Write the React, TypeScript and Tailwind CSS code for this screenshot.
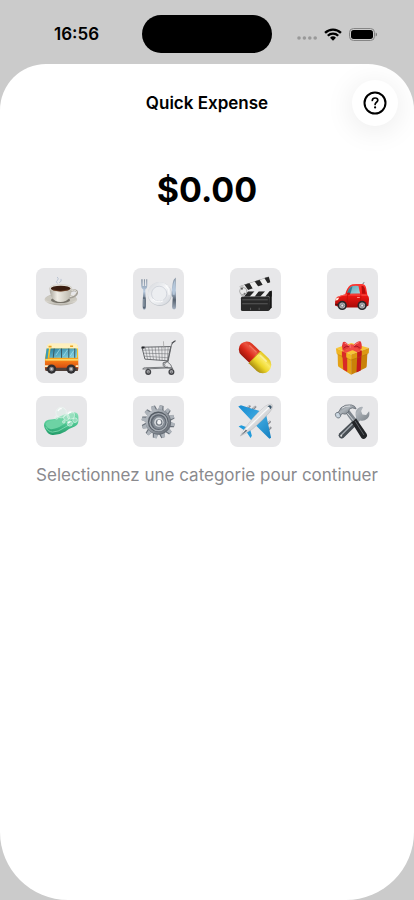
import { useState } from "react";
import type { ReactNode } from "react";

type Category = {
  id: string;
  label: string;
  art: ReactNode;
};

const CoffeeArt = () => (
  <>
    <defs>
      <linearGradient id="cup" x1="0" x2="1">
        <stop offset="0" stopColor="#a9a59b" />
        <stop offset="0.35" stopColor="#efece4" />
        <stop offset="1" stopColor="#b9b5aa" />
      </linearGradient>
      <linearGradient id="saucer" x1="0" y1="0" x2="0" y2="1">
        <stop offset="0" stopColor="#b9b5ac" />
        <stop offset="0.7" stopColor="#d8d5cd" />
        <stop offset="1" stopColor="#aaa69d" />
      </linearGradient>
    </defs>
    <path d="M64 46q-6-5 1-9q5-4 0-9M71 44q8-3 5-10" fill="none" stroke="#b9c3d3" strokeWidth="3" strokeLinecap="round" />
    <ellipse cx="75" cy="95" rx="49" ry="18" fill="url(#saucer)" />
    <ellipse cx="75" cy="93" rx="45" ry="14" fill="#cbc8bf" />
    <ellipse cx="74" cy="97" rx="29" ry="9" fill="#77736b" />
    <path d="M105 69q20-5 19 6q-2 12-24 15" fill="none" stroke="#a39f96" strokeWidth="6" />
    <path d="M105 68q19-4 17 6q-2 9-21 13" fill="none" stroke="#e6e3dc" strokeWidth="3" />
    <path d="M41 61q0 27 17 38q16 8 33 0q17-11 17-38z" fill="url(#cup)" />
    <ellipse cx="74.500" cy="61" rx="34" ry="11" fill="#e9e6de" stroke="#b5b1a8" />
    <ellipse cx="74.500" cy="62" rx="30" ry="8.500" fill="#3a1d10" />
    <path d="M50 66q24 9 49 0" fill="none" stroke="#7b4b2c" strokeWidth="2" />
  </>
);

const PlateArt = () => (
  <>
    <defs>
      <linearGradient id="steel" x1="0" y1="0" x2="0" y2="1">
        <stop offset="0" stopColor="#7d8b9b" />
        <stop offset="0.4" stopColor="#b9cbe0" />
        <stop offset="0.7" stopColor="#56616f" />
        <stop offset="1" stopColor="#a7b3c3" />
      </linearGradient>
      <linearGradient id="plate" x1="0" y1="0" x2="1" y2="1">
        <stop offset="0" stopColor="#d3d6db" />
        <stop offset="0.5" stopColor="#f4f5f7" />
        <stop offset="1" stopColor="#cfd3d9" />
      </linearGradient>
    </defs>
    <circle cx="81" cy="79" r="36" fill="#c5c9cf" />
    <circle cx="80" cy="77" r="35" fill="url(#plate)" />
    <circle cx="79" cy="78" r="23" fill="#eceef1" stroke="#c4c9d1" strokeWidth="2" />
    <path d="M61 94a24 24 0 0 0 30 5M99 52a31 31 0 0 1 10 29" fill="none" stroke="#fff" strokeWidth="3" />
    <path d="M25 34v20q0 9 6 11l-2 52q0 9 5 9t5-9l-2-52q6-2 6-11V34h-3v20h-4V34h-3v20h-4V34z" fill="url(#steel)" />
    <path d="M30 89v29q0 5 4 5t4-5V89z" fill="#566474" />
    <path d="M33 93v24" stroke="#c9d6e4" strokeWidth="2" />
    <path d="M129 29q-13 9-12 54l3 6-2 29q0 7 6 7t6-7z" fill="url(#steel)" />
    <path d="M127 35q-8 17-7 46h6z" fill="#b5c7da" />
  </>
);

const ClapperArt = () => (
  <>
    <defs>
      <clipPath id="arm">
        <path d="M28 55L117 26l5 17L34 73z" />
      </clipPath>
      <clipPath id="slate">
        <path d="M33 70h93v17H33z" />
      </clipPath>
    </defs>
    <g clipPath="url(#arm)">
      <rect width="154" height="154" fill="#ececec" />
      <path d="M40 45l18 26h16L55 39zM70 34l18 26h16L86 30zM101 26l15 24h14V20z" fill="#262626" />
      <path d="M28 55L117 26" stroke="#777" strokeWidth="2" />
    </g>
    <g clipPath="url(#slate)">
      <rect width="154" height="154" fill="#ececec" />
      <path d="M55 70L42 87h17l15-17zM87 70L74 87h17l15-17zM119 70l-13 17h25V70z" fill="#262626" />
    </g>
    <rect x="33" y="86" width="86" height="44" rx="5" fill="#292929" />
    <path d="M119 71l7-3v51l-8 9z" fill="#151515" />
    <path d="M37 96h77M37 108h77M62 120v7M88 120v7" stroke="#727272" strokeWidth="2" />
    <path d="M29 56l10-2 13 14-8 17H33q2-15-4-29z" fill="#bfbfbf" />
    <circle cx="40" cy="70" r="11" fill="#e8e8e8" stroke="#8d8d8d" strokeWidth="2" />
    <circle cx="36" cy="63" r="3" fill="#555" />
    <circle cx="44" cy="78" r="3" fill="#777" />
  </>
);

const CarArt = () => (
  <>
    <defs>
      <linearGradient id="carBody" x1="0" y1="0" x2="0" y2="1">
        <stop offset="0" stopColor="#ff3b35" />
        <stop offset="0.5" stopColor="#ef1712" />
        <stop offset="1" stopColor="#a90a09" />
      </linearGradient>
      <linearGradient id="carGlass" x1="0" y1="0" x2="1" y2="1">
        <stop offset="0" stopColor="#5fa7b6" />
        <stop offset="1" stopColor="#a3d6dd" />
      </linearGradient>
    </defs>
    <path d="M107 50l5-7" stroke="#333" strokeWidth="2" />
    <path d="M24 113l1-17q3-10 17-13l13-4q5-19 15-27 5-4 18-4h17q11 0 13 12l4 22q5 3 5 12l-2 20-14 5H40z" fill="url(#carBody)" />
    <path d="M60 78q5-17 13-22 4-3 22-2l5 23z" fill="url(#carGlass)" />
    <path d="M60 78q5-17 12-21l5-2-6 23z" fill="#367d91" />
    <path d="M104 54q8-1 10 8l3 16h-11z" fill="#b50d0b" />
    <path d="M30 89q14-7 31-8l59 1" fill="none" stroke="#ff7b70" strokeWidth="2" />
    <path d="M62 80q-4 16 4 34h24q15-13 12-34" fill="none" stroke="#b80c09" strokeWidth="2" />
    <ellipse cx="65" cy="78" rx="5" ry="4" fill="#d50e0b" />
    <path d="M26 92l11-3-4 8-8 2z" fill="#ffe7d8" />
    <path d="M25 110h9" stroke="#591010" strokeWidth="4" />
    <path d="M91 89h8" stroke="#ff9a90" strokeWidth="3" />
    {[46, 106].map((x) => (
      <g key={x}>
        <circle cx={x} cy="113" r="14" fill="#29282b" />
        <circle cx={x} cy="113" r="9" fill="#b7b8bc" />
        <path d={`M${x - 8} 113h16M${x} 105v16M${x - 6} 107l12 12M${x + 6} 107l-12 12`} stroke="#67686c" strokeWidth="2" />
        <circle cx={x} cy="113" r="3" fill="#e8e8ea" />
      </g>
    ))}
  </>
);

const BusArt = () => (
  <>
    <defs>
      <linearGradient id="busBody" x1="0" y1="0" x2="0" y2="1">
        <stop offset="0" stopColor="#ffd83d" />
        <stop offset="0.45" stopColor="#ffc11b" />
        <stop offset="0.65" stopColor="#f47716" />
        <stop offset="1" stopColor="#c43a12" />
      </linearGradient>
      <linearGradient id="busGlass" x1="0" y1="0" x2="1" y2="1">
        <stop offset="0" stopColor="#277e9e" />
        <stop offset="1" stopColor="#8edae8" />
      </linearGradient>
    </defs>
    <path d="M27 111V78l6-31q1-10 9-10h76q8 0 9 9l1 65q0 7-7 7H34q-7 0-7-7z" fill="url(#busBody)" />
    <path d="M33 47q0-13 13-13h69q12 0 12 13l-1 3H32z" fill="#fff0bd" />
    <path d="M38 44h9M103 43h9" stroke="#e9a11e" strokeWidth="5" />
    <path d="M32 50h7l-4 31h-7z" fill="#3a9cb7" />
    <path d="M44 50h76q4 0 4 4v24H40z" fill="url(#busGlass)" />
    <path d="M55 50l-3 28M77 50v28M99 50v28M117 50v28" stroke="#3a5860" strokeWidth="3" />
    <path d="M60 70l12-18M83 72l12-18M103 73l11-17" stroke="#b8edf1" strokeWidth="3" opacity="0.6" />
    <path d="M28 84h99" stroke="#ffe879" strokeWidth="4" />
    <path d="M28 108h98v10H33q-5 0-5-5z" fill="#52423b" />
    <path d="M27 103h11M120 103h8" stroke="#fff0bd" strokeWidth="5" />
    {[47, 106].map((x) => (
      <g key={x}>
        <circle cx={x} cy="112" r="14" fill="#302f32" />
        <circle cx={x} cy="112" r="7" fill="#88898d" />
        <circle cx={x} cy="112" r="3" fill="#d5d6d8" />
      </g>
    ))}
  </>
);

const CartArt = () => (
  <>
    <g fill="none" stroke="#64666a">
      <path d="M27 46l87-2-9 43-69-5z" strokeWidth="3" />
      <path d="M29 55l83-1M31 64l79 2M33 73l75 5M37 46l7 36M47 46l6 37M57 45l5 39M67 45l4 40M77 45l3 40M87 45l1 41M97 45l-1 41M106 45l-2 41" strokeWidth="1.500" />
      <path d="M127 28q-8 1-11 12l-10 48-15 5q-2 10 6 14l24 3" strokeWidth="3" />
      <path d="M107 89q-16 4-10 14M105 91q12 7 13 19M29 112l87-4M30 112q1-5 7-4l69-2" strokeWidth="2.500" />
      <path d="M92 28l1 22" strokeWidth="2" stroke="#999" />
    </g>
    <path d="M118 33l9-6" stroke="#55575b" strokeWidth="4" strokeLinecap="round" />
    <path d="M26 44h9v6h-9z" fill="#242529" />
    <path d="M45 109v7M117 108v7" stroke="#77797d" strokeWidth="5" />
    {[46, 116].map((x) => (
      <g key={x}>
        <circle cx={x} cy="121" r="9" fill="#424347" />
        <circle cx={x} cy="120" r="5" fill="#a6a7ab" />
        <circle cx={x} cy="121" r="2" fill="#555" />
      </g>
    ))}
  </>
);

const PillArt = () => (
  <>
    <defs>
      <linearGradient id="pillRed" x1="0" y1="0" x2="0" y2="1">
        <stop offset="0" stopColor="#d8321d" />
        <stop offset="0.3" stopColor="#ea5340" />
        <stop offset="0.6" stopColor="#db291a" />
        <stop offset="1" stopColor="#9c160d" />
      </linearGradient>
      <linearGradient id="pillYellow" x1="0" y1="0" x2="0" y2="1">
        <stop offset="0" stopColor="#e3c61f" />
        <stop offset="0.3" stopColor="#faea66" />
        <stop offset="0.6" stopColor="#edd62a" />
        <stop offset="1" stopColor="#aa8d10" />
      </linearGradient>
    </defs>
    <g transform="rotate(44 75 76)">
      <path d="M76 52H41a24 24 0 0 0 0 48h35z" fill="url(#pillRed)" />
      <path d="M74 50h34a26 26 0 0 1 0 52H74z" fill="url(#pillYellow)" />
      <path d="M75 50v52" stroke="#c29915" strokeWidth="2" />
      <path d="M40 62h27" stroke="#ff9b89" strokeWidth="4" strokeLinecap="round" opacity="0.5" />
      <path d="M83 61h25" stroke="#fffac8" strokeWidth="5" strokeLinecap="round" opacity="0.6" />
    </g>
  </>
);

const GiftArt = () => (
  <>
    <path d="M32 62l41 19v48l-37-23q-3-2-3-6z" fill="#e4a116" />
    <path d="M73 81l49-19-2 41q0 4-4 6l-43 20z" fill="#c98208" />
    <path d="M27 49l46-16 54 15-54 20z" fill="#f7c638" />
    <path d="M27 49l46 19v16L29 66z" fill="#f0b522" />
    <path d="M73 68l54-20-1 16-53 20z" fill="#dc9812" />
    <path d="M45 58l13 5v14l3 1v42l-12-7-2-36-2-1z" fill="#d92a27" />
    <path d="M91 61l14-5v15l-1 1-2 44-13 6 2-46z" fill="#c4191d" />
    <path d="M45 57l49-17 10 3-46 20zM47 40l11-4 47 20-14 5z" fill="#f04a42" />
    <path d="M31 67l42 18 51-19" fill="none" stroke="#a96b0a" strokeWidth="2" opacity="0.5" />
    <path d="M70 44Q54 25 48 31q-5 10-1 23l5 2q12-8 20-8zM77 43q14-17 24-15 6 9 3 23l-6 3q-12-8-20-6z" fill="#e53738" />
    <path d="M69 44q-12-4-19 5M79 43q13-3 20 5" fill="none" stroke="#a91520" strokeWidth="3" />
    <path d="M53 34q6 0 13 8M96 32q-8 1-15 10" fill="none" stroke="#ff8380" strokeWidth="3" />
    <rect x="67" y="37" width="14" height="14" rx="5" fill="#f04c4a" />
    <path d="M70 39v9" stroke="#ff8c88" strokeWidth="2" />
  </>
);

const SoapArt = () => (
  <>
    <defs>
      <linearGradient id="soap" x1="0" y1="0" x2="0" y2="1">
        <stop offset="0" stopColor="#8fe0ba" />
        <stop offset="0.5" stopColor="#4fc793" />
        <stop offset="1" stopColor="#219b68" />
      </linearGradient>
    </defs>
    <path d="M24 89q0-13 14-17 20-1 36-11 24-11 42-12 12 1 12 14v13q-1 11-11 16-15 5-28 15-20 12-40 11-13-2-20-16-4-6-5-13z" fill="url(#soap)" />
    <path d="M29 84q4-8 16-9 20-3 36-12 20-9 37-10 7 7-2 15-20 8-35 19-20 14-38 13-13-4-14-16z" fill="#6dd3a4" />
    <path d="M30 94q6 14 20 15 18-1 33-12 16-11 38-19" fill="none" stroke="#97e6c1" strokeWidth="2" />
    <g fill="#d9f3e7" fillOpacity="0.4" stroke="#f3fbf7" strokeWidth="1.500">
      <circle cx="76" cy="50" r="16" />
      <circle cx="105" cy="58" r="12" />
      <circle cx="92" cy="65" r="9" />
      <circle cx="62" cy="65" r="5" />
      <circle cx="118" cy="73" r="7" />
      <circle cx="102" cy="83" r="8" />
      <circle cx="84" cy="78" r="4" />
    </g>
    <path d="M67 44q4-7 9-6M97 54q3-5 8-5M98 81q2-3 5-3" fill="none" stroke="#fff" strokeWidth="4" strokeLinecap="round" />
  </>
);

const teeth = [0, 30, 60, 90, 120, 150, 180, 210, 240, 270, 300, 330];

const GearArt = () => (
  <>
    <defs>
      <linearGradient id="gear" x1="0" y1="0" x2="1" y2="1">
        <stop offset="0" stopColor="#c6cbd1" />
        <stop offset="0.5" stopColor="#959ba3" />
        <stop offset="1" stopColor="#626870" />
      </linearGradient>
    </defs>
    {teeth.map((angle) => (
      <g key={angle} transform={`rotate(${angle + 12} 76 78)`}>
        <path d="M68 43l3-15h11l3 15z" fill="#697079" />
        <path d="M68 43l2-15h9l2 15z" fill="#adb3ba" />
      </g>
    ))}
    <circle cx="77" cy="79" r="38" fill="#666d76" />
    <circle cx="75" cy="77" r="37" fill="url(#gear)" />
    <circle cx="76" cy="78" r="31" fill="#555c65" />
    <circle cx="77" cy="79" r="28" fill="#a7adb4" />
    <circle cx="77" cy="79" r="24" fill="#5f6670" />
    <circle cx="78" cy="80" r="20" fill="#858c95" />
    <circle cx="78" cy="79" r="14" fill="#d3d7db" />
    <circle cx="79" cy="80" r="10" fill="#747b84" />
    <ellipse cx="79" cy="79" rx="6" ry="7" fill="#f1f2f4" />
  </>
);

const PlaneArt = () => (
  <>
    <defs>
      <linearGradient id="fuselage" x1="0" y1="0" x2="1" y2="1">
        <stop offset="0.2" stopColor="#ffffff" />
        <stop offset="0.6" stopColor="#d0d1d4" />
        <stop offset="1" stopColor="#8c8e93" />
      </linearGradient>
      <linearGradient id="wing" x1="0" y1="0" x2="1" y2="1">
        <stop offset="0" stopColor="#168bd1" />
        <stop offset="0.5" stopColor="#3fa9e0" />
        <stop offset="1" stopColor="#147fc0" />
      </linearGradient>
    </defs>
    <g stroke="#898b91" strokeWidth="7" strokeLinecap="round">
      <path d="M53 37l6-6M70 39l6-6M113 84l7-6M115 102l7-6" />
    </g>
    <g stroke="#d7d8da" strokeWidth="3" strokeLinecap="round">
      <path d="M53 35l5-5M70 37l5-5M113 82l6-5M115 100l6-5" />
    </g>
    <path d="M25 32l8-4 62 19-28 29zM124 126l-5 3-40-39 30-34z" fill="url(#wing)" />
    <path d="M26 92l8-4 21 8-5 12zM62 127l4-7-6-22-11 9z" fill="#209bdc" />
    <path d="M31 121q10-20 22-34Q80 50 106 31q16-10 21-5 6 6-7 23Q97 76 69 99 48 114 31 121z" fill="url(#fuselage)" stroke="#a2a3a7" />
    <path d="M39 110Q65 86 85 66t36-34" fill="none" stroke="#fff" strokeWidth="4" opacity="0.8" />
    <path d="M113 31q7 1 9 9l4-6q0-6-6-6z" fill="#3c566a" />
    <path d="M32 120l16-19 4 4z" fill="#67717b" />
  </>
);

const ToolsArt = () => (
  <>
    <defs>
      <linearGradient id="metal" x1="0" y1="0" x2="1" y2="1">
        <stop offset="0" stopColor="#5d656d" />
        <stop offset="0.4" stopColor="#aeb4ba" />
        <stop offset="1" stopColor="#4d545b" />
      </linearGradient>
    </defs>
    <path d="M88 65q-6-17 5-27 8-8 16-5l-6 12 4 11 11 1 9-11q4 13-5 22-10 9-22 6L50 126q-6 5-12-1t-1-12z" fill="url(#metal)" />
    <path d="M82 71l13 11-45 44q-6 5-12-1t-1-12z" fill="#484e54" />
    <path d="M88 73l-46 46" stroke="#a3a9af" strokeWidth="4" />
    <circle cx="43" cy="120" r="3" fill="#ddd" />
    <path d="M56 51l11-9 22 29-12 10z" fill="#80878e" />
    <path d="M60 50l22 26" stroke="#d3d7db" strokeWidth="3" />
    <path d="M74 79l14-11 32 47q4 6-3 12t-13 0z" fill="#222427" />
    <path d="M85 76l26 41" stroke="#5f6368" strokeWidth="3" strokeLinecap="round" />
    <path d="M28 53l8-6 6-11q13-12 32-9 11 2 14 12-12-6-20 0l-4 10-9 6-10-2-4 7-8 5z" fill="url(#metal)" stroke="#555d65" strokeWidth="2" />
    <ellipse cx="33" cy="58" rx="7" ry="9" transform="rotate(-30 33 58)" fill="#c9d5df" stroke="#59636c" strokeWidth="2" />
    <path d="M45 37q10-8 25-7" fill="none" stroke="#e3e5e8" strokeWidth="3" />
  </>
);

const categories: Category[] = [
  { id: "coffee", label: "Café", art: <CoffeeArt /> },
  { id: "restaurant", label: "Restaurant", art: <PlateArt /> },
  { id: "cinema", label: "Cinéma", art: <ClapperArt /> },
  { id: "car", label: "Voiture", art: <CarArt /> },
  { id: "bus", label: "Transport", art: <BusArt /> },
  { id: "groceries", label: "Courses", art: <CartArt /> },
  { id: "health", label: "Santé", art: <PillArt /> },
  { id: "gift", label: "Cadeaux", art: <GiftArt /> },
  { id: "hygiene", label: "Hygiène", art: <SoapArt /> },
  { id: "services", label: "Services", art: <GearArt /> },
  { id: "travel", label: "Voyage", art: <PlaneArt /> },
  { id: "repairs", label: "Travaux", art: <ToolsArt /> },
];

const StatusBar = () => (
  <header className="grid grid-cols-3 items-center h-16 pt-1">
    <span className="pl-[15px] text-center text-[17px] leading-5 font-semibold">
      16:56
    </span>
    <div className="h-[38px] w-[130px] justify-self-center rounded-full bg-black" />
    <div className="flex items-center justify-center gap-[7px] pr-4">
      <svg className="w-5 h-3" viewBox="0 0 20 12" fill="#999">
        <circle cx="2" cy="10" r="1.800" />
        <circle cx="7.400" cy="10" r="1.800" />
        <circle cx="12.800" cy="10" r="1.800" />
        <circle cx="18.200" cy="10" r="1.800" />
      </svg>
      <svg className="w-[18px] h-[13px]" viewBox="0 0 17 12">
        <path d="M1 4.400a10.800 10.800 0 0 1 15 0M3.600 7.200a7 7 0 0 1 9.800 0" fill="none" stroke="#000" strokeWidth="2.200" />
        <path d="M5.700 9.100a4 4 0 0 1 5.600 0L8.500 12z" />
      </svg>
      <svg className="w-7 h-[13px]" viewBox="0 0 28 13">
        <rect x="0.500" y="0.500" width="25" height="12" rx="4" fill="none" stroke="#858585" />
        <rect x="2" y="2" width="22" height="9" rx="2.700" />
        <path d="M26.700 4.500q1.300.6 1.300 2t-1.300 2z" fill="#777" />
      </svg>
    </div>
  </header>
);

const App = () => {
  const [selected, setSelected] = useState<string>("");

  return (
    <div className="flex flex-col min-h-screen bg-[#cbcbcb] text-black font-[Inter,sans-serif]">
      <StatusBar />
      <main className="flex-1 overflow-hidden bg-white rounded-t-[46px] rounded-b-[68px]">
        <div className="grid grid-cols-[1fr_auto_1fr] items-center px-4 pt-4">
          <h1 className="col-start-2 text-[17px] leading-6 font-semibold">
            Quick Expense
          </h1>
          <button
            type="button"
            aria-label="Aide"
            className="flex items-center justify-center justify-self-end size-[46px] rounded-full bg-white shadow-[0_4px_30px_rgba(0,0,0,0.09)]"
          >
            <svg className="size-6" viewBox="0 0 24 24" fill="none" stroke="#000" strokeWidth="2">
              <circle cx="12" cy="12" r="10.500" />
              <path d="M9.300 9.500c.1-1.600 1.200-2.500 2.800-2.500s2.700.9 2.700 2.300c0 1.900-2.700 2-2.700 4.200" strokeWidth="1.700" strokeLinecap="round" />
              <circle cx="12.100" cy="16.400" r="1.100" fill="#000" stroke="none" />
            </svg>
          </button>
        </div>
        <p className="mt-10 text-center text-[34px] leading-12 font-bold">
          $0.00
        </p>
        <div className="grid grid-cols-4 justify-items-center gap-y-[13px] px-[13px] mt-[54px]">
          {categories.map((category) => (
            <button
              key={category.id}
              type="button"
              aria-label={category.label}
              aria-pressed={selected === category.id}
              onClick={() => setSelected(category.id)}
              className="size-[51px] rounded-lg bg-[#e7e7e9] aria-pressed:bg-[#d1d1d6]"
            >
              <svg className="size-full" viewBox="0 0 154 154">
                {category.art}
              </svg>
            </button>
          ))}
        </div>
        <p className="mt-4 text-center text-[17px] leading-6 text-[#8a8a8e]">
          Selectionnez une categorie pour continuer
        </p>
      </main>
    </div>
  );
};

export default App;
